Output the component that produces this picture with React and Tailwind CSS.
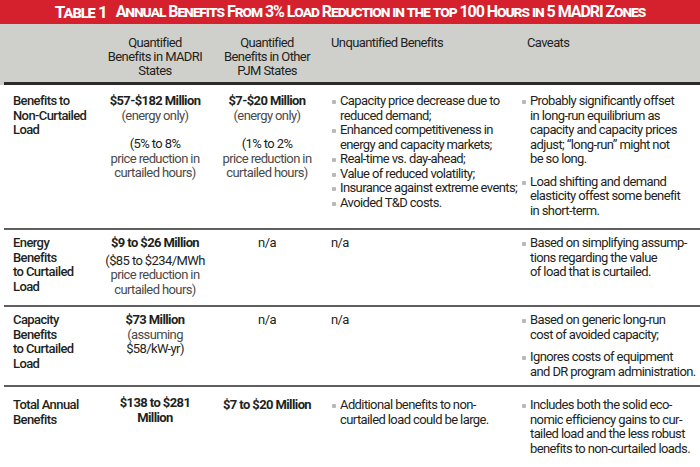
const rows = [
  {
    label: ['Benefits to', 'Non-Curtailed', 'Load'],
    pt: 'pt-[9px]',
    h: 'h-[143px]',
    madri: (
      <>
        <div className="font-bold">$57-$182 Million</div>
        <div className="text-[#4a4a4a]">(energy only)</div>
        <div className="mt-[14px]">(5% to 8%</div>
        <div className="text-[#4a4a4a]">price reduction in</div>
        <div className="text-[#4a4a4a]">curtailed hours)</div>
      </>
    ),
    pjm: (
      <>
        <div className="font-bold">$7-$20 Million</div>
        <div className="text-[#4a4a4a]">(energy only)</div>
        <div className="mt-[14px]">(1% to 2%</div>
        <div className="text-[#4a4a4a]">price reduction in</div>
        <div className="text-[#4a4a4a]">curtailed hours)</div>
      </>
    ),
    unq: [
      ['Capacity price decrease due to', 'reduced demand;'],
      ['Enhanced competitiveness in', 'energy and capacity markets;'],
      ['Real-time vs. day-ahead;'],
      ['Value of reduced volatility;'],
      ['Insurance against extreme events;'],
      ['Avoided T&D costs.'],
    ],
    cav: [
      ['Probably significantly offset', 'in long-run equilibrium as', 'capacity and capacity prices', 'adjust; \u201clong-run\u201d might not', 'be so long.'],
      ['Load shifting and demand', 'elasticity offest some benefit', 'in short-term.'],
    ],
  },
  {
    label: ['Energy', 'Benefits', 'to Curtailed', 'Load'],
    pt: 'pt-[6px]',
    h: 'h-[75px]',
    madri: (
      <>
        <div className="font-bold">$9 to $26 Million</div>
        <div className="mt-[3px]">($85 to $234/MWh</div>
        <div className="text-[#4a4a4a]">price reduction in</div>
        <div className="text-[#4a4a4a]">curtailed hours)</div>
      </>
    ),
    pjm: <div>n/a</div>,
    unq: 'n/a',
    cav: [['Based on simplifying assump-', 'tions regarding the value', 'of load that is curtailed.']],
  },
  {
    label: ['Capacity', 'Benefits', 'to Curtailed', 'Load'],
    pt: 'pt-[6px]',
    h: 'h-[78px]',
    madri: (
      <>
        <div className="font-bold">$73 Million</div>
        <div className="text-[#4a4a4a]">(assuming</div>
        <div>$58/kW-yr)</div>
      </>
    ),
    pjm: <div>n/a</div>,
    unq: 'n/a',
    cav: [
      ['Based on generic long-run', 'cost of avoided capacity;'],
      ['Ignores costs of equipment', 'and DR program administration.'],
    ],
  },
  {
    label: ['Total Annual', 'Benefits'],
    pt: 'pt-[11px]',
    h: 'h-[83px]',
    madri: (
      <div className="font-bold -mt-[2px]">
        <div>$138 to $281</div>
        <div>Million</div>
      </div>
    ),
    pjm: <div className="font-bold">$7 to $20 Million</div>,
    unq: [['Additional benefits to non-', 'curtailed load could be large.']],
    cav: [['Includes both the solid eco-', 'nomic efficiency gains to cur-', 'tailed load and the less robust', 'benefits to non-curtailed loads.']],
  },
];

function Bullet({ lines, className = '' }) {
  return (
    <div className={`flex ${className}`}>
      <span className="w-[8px] shrink-0 pt-[6px]">
        <span className="block w-[4px] h-[4px] rounded-[1px] bg-[#b8b8b8]" />
      </span>
      <div className="flex-1">
        {lines.map((l) => <div key={l}>{l}</div>)}
      </div>
    </div>
  );
}

export default function App() {
  return (
    <div className="w-[700px] h-[467px] overflow-hidden bg-white text-[#231f20] text-[13px] leading-[14.5px] tracking-[-0.6px] whitespace-nowrap font-['Roboto','Liberation_Sans',sans-serif]">
      {/* title bar */}
      <div className="h-[24px] bg-[#d5202e] flex items-center justify-center text-white font-bold text-[16px] leading-none [font-variant:small-caps] tracking-[-1.05px]">
        <span className="text-[17px]">Table 1</span>
        <span className="ml-[9px]">Annual Benefits From 3% Load Reduction in the top 100 Hours in 5 MADRI Zones</span>
      </div>

      {/* column headers */}
      <div className="bg-[#cfd0cb] h-[61px] flex flex-col">
        <div className="flex-1 grid grid-cols-[92px_100px_124px_190px_1fr] pl-[13px] pt-[12px] leading-[14px] text-[#231f20]">
          <div />
          <div className="text-center">Quantified<br />Benefits in MADRI<br />States</div>
          <div className="text-center">Quantified<br />Benefits in Other<br />PJM States</div>
          <div className="pl-[2px]">Unquantified Benefits</div>
          <div className="pl-[8px]">Caveats</div>
        </div>
        <div className="ml-[4px] h-[3px] bg-[#2b2b2b]" />
      </div>

      {rows.map((r, i) => (
        <div key={i} className={`${i > 0 ? 'ml-[4px] border-t-2 border-[#5f5f5f]' : ''}`}>
          <div className={`grid grid-cols-[92px_100px_124px_190px_1fr] ${i > 0 ? 'pl-[9px]' : 'pl-[13px]'} ${r.pt} ${r.h}`}>
            <div className="font-medium">
              {r.label.map((l) => <div key={l}>{l}</div>)}
            </div>
            <div className="text-center">{r.madri}</div>
            <div className="text-center">{r.pjm}</div>
            <div className="pl-[3px] pr-[4px]">
              {typeof r.unq === 'string' ? (
                <div className="-ml-[1px]">{r.unq}</div>
              ) : (
                r.unq.map((lines, j) => <Bullet key={j} lines={lines} />)
              )}
            </div>
            <div className="pl-[3px]">
              {r.cav.map((lines, j) => (
                <Bullet key={j} lines={lines} className={j > 0 ? 'mt-[8px]' : ''} />
              ))}
            </div>
          </div>
        </div>
      ))}
    </div>
  );
}
